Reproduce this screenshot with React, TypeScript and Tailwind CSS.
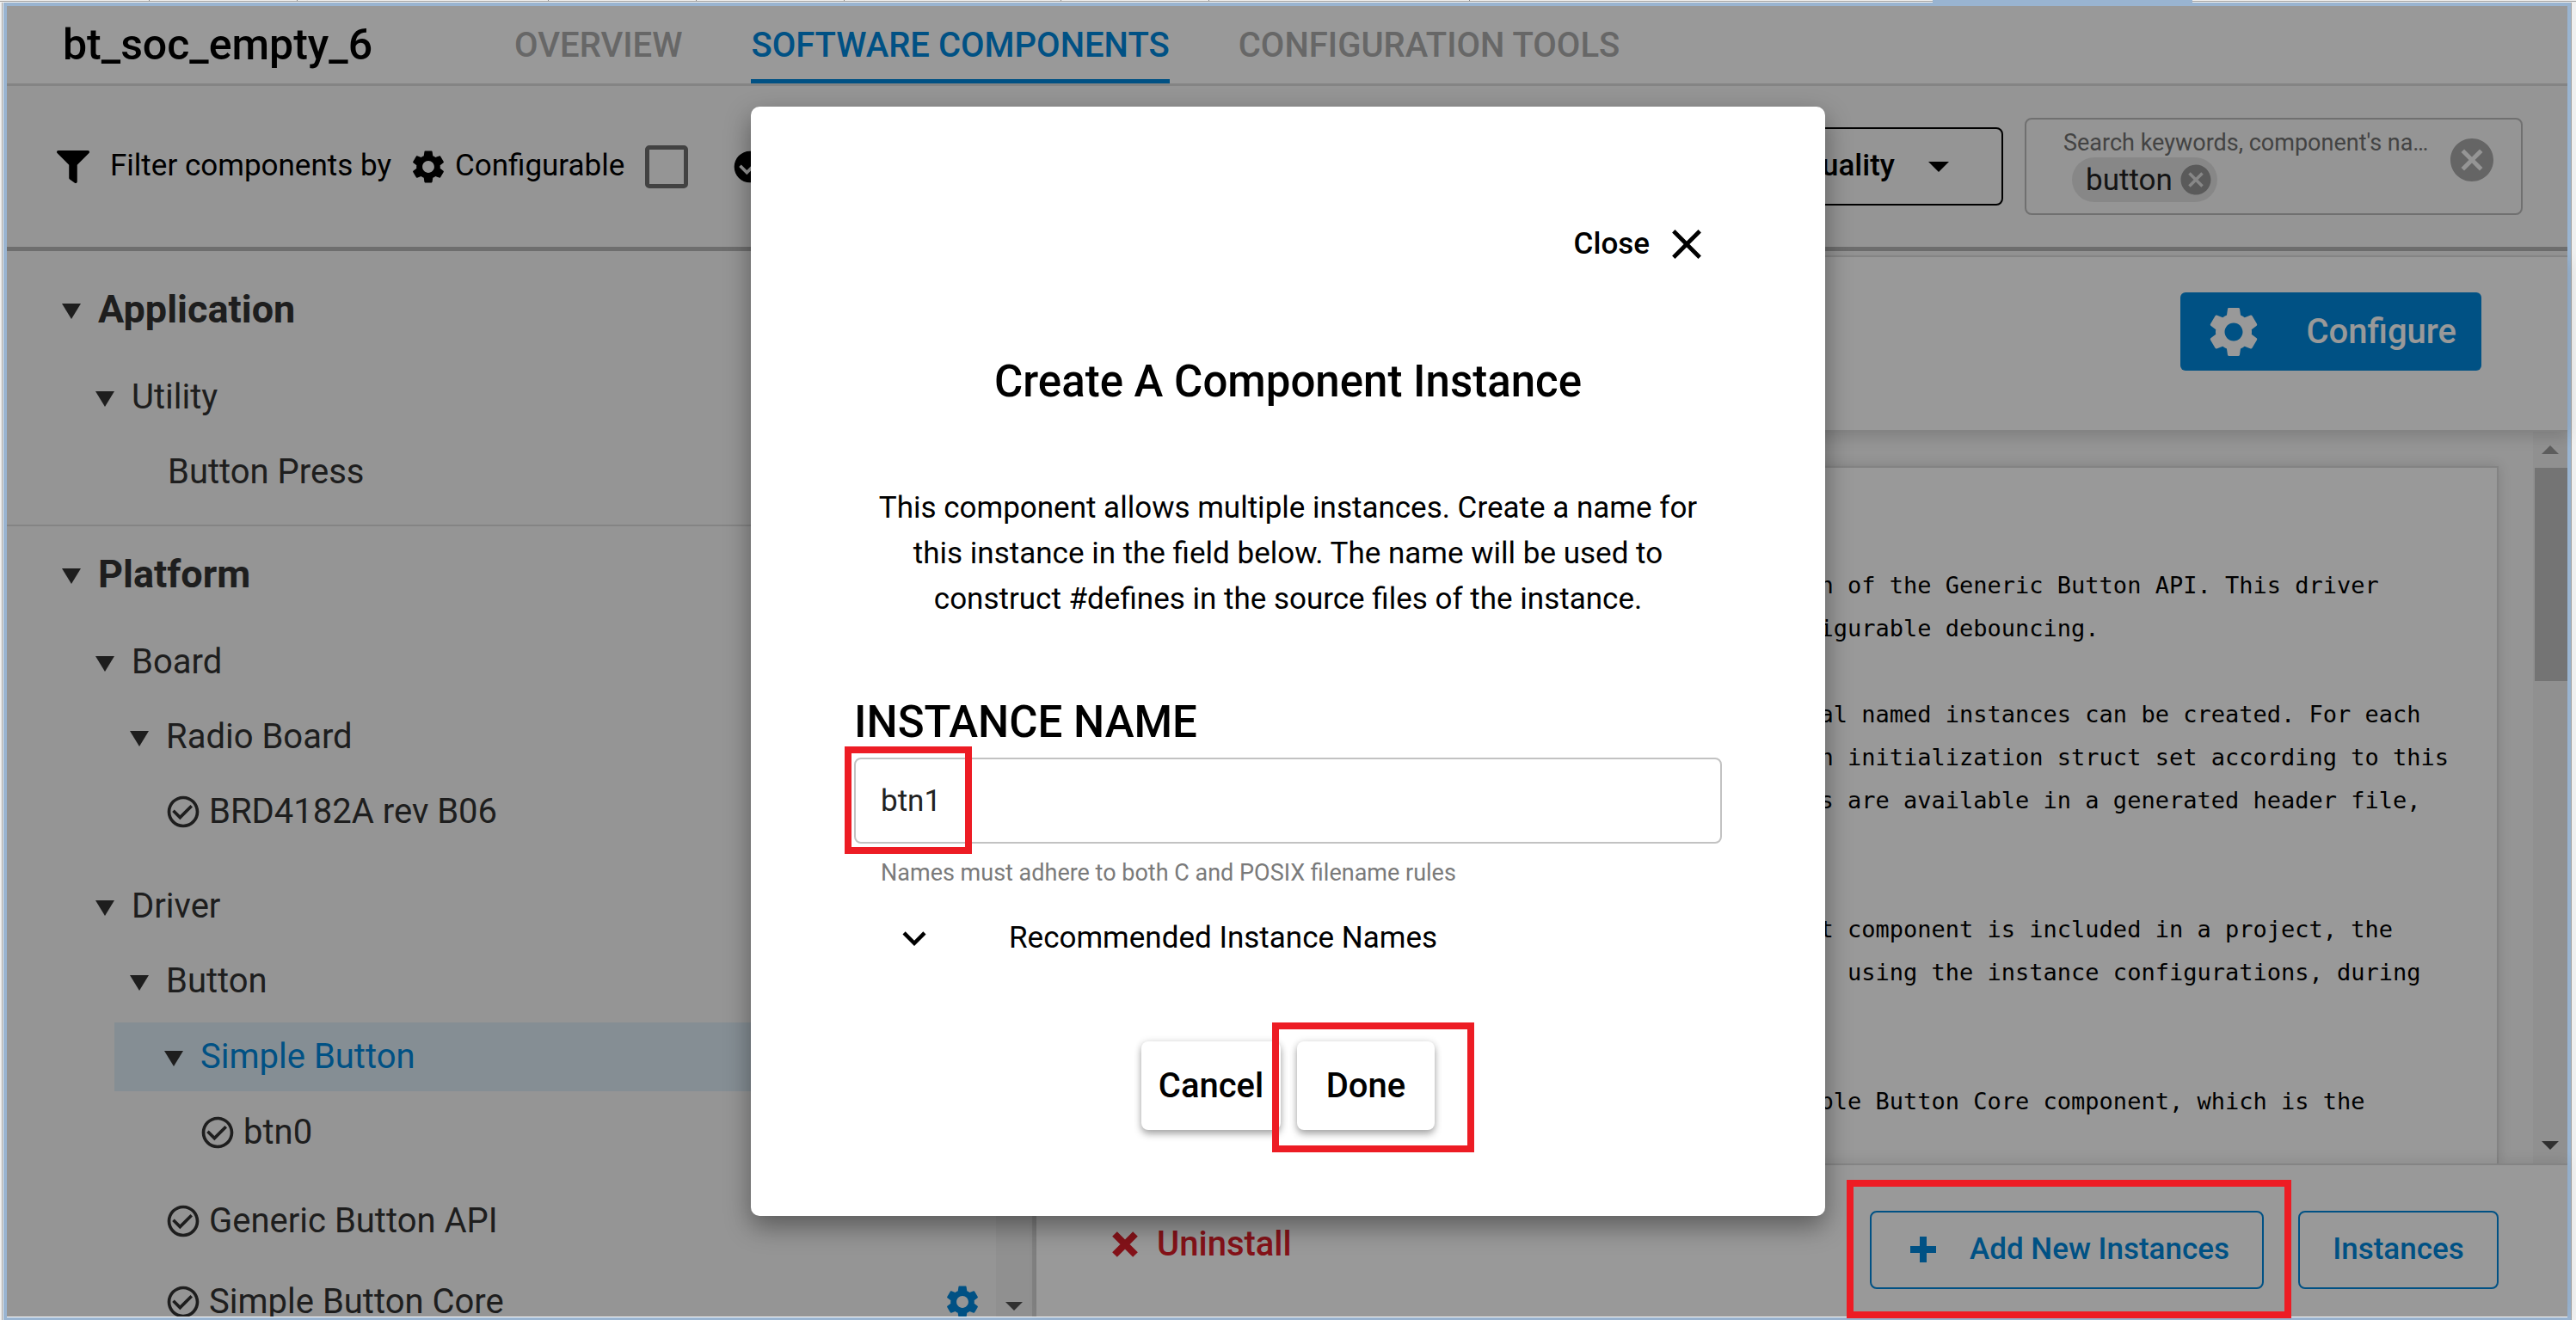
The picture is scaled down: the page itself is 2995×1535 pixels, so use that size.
import React from "react";
import { FaFilter } from "react-icons/fa";
import {
  MdCancel,
  MdCheckCircle,
  MdCheckCircleOutline,
  MdClose,
  MdExpandMore,
  MdSettings,
} from "react-icons/md";

function Triangle({ up = false, className }: { up?: boolean; className: string }) {
  return (
    <svg viewBox="0 0 24 12" preserveAspectRatio="none" className={className} fill="currentColor" aria-hidden="true">
      <path d={up ? "M0 12 12 0l12 12z" : "M0 0h24L12 12z"} />
    </svg>
  );
}

const editorTabs = [
  "w-[170px]",
  "w-[172px]",
  "w-[292px]",
  "w-[172px]",
  "w-[172px]",
  "w-[252px]",
  "w-[172px]",
  "w-[303px]",
];

function EditorTabStrip() {
  return (
    <div className="h-[3px] shrink-0 bg-[#f0f0f0]" aria-hidden="true">
      <div className="flex h-0.5 border-b border-[#a0a0a0] pl-1">
        {editorTabs.map((w, i) => (
          <div key={i} className={`${w} border-r border-[#8a8a8a]`} />
        ))}
        <div className="flex-1" />
        <div className="-mb-0.5 w-[302px] bg-[#99b4d1]" />
        <div className="w-[446px]" />
      </div>
    </div>
  );
}

function Header() {
  return (
    <header className="flex h-[93px] shrink-0 items-stretch border-b-3 border-[#dcdcdc] bg-white pl-[65px]">
      <h1 className="flex items-center text-[50px] font-medium leading-none text-black">bt_soc_empty_6</h1>
      <nav className="ml-[165px] flex gap-20 text-[40px] font-medium leading-none">
        <a href="#overview" className="flex items-center border-b-5 border-transparent pt-1.5 text-[#acacac]">
          OVERVIEW
        </a>
        <a href="#components" className="flex items-center border-b-5 border-[#0087dc] pt-1.5 text-[#0087dc]">
          SOFTWARE COMPONENTS
        </a>
        <a href="#tools" className="flex items-center border-b-5 border-transparent pt-1.5 text-[#acacac]">
          CONFIGURATION TOOLS
        </a>
      </nav>
    </header>
  );
}

function FilterBar() {
  return (
    <div className="flex h-[192px] shrink-0 items-center border-b-5 border-[#b7b7b7] pl-[58px] pr-[52px] text-[35px] text-black">
      <FaFilter className="h-[42px] w-[38px]" />
      <span className="ml-6">Filter components by</span>
      <MdSettings className="ml-5 size-[46px]" />
      <label htmlFor="configurable" className="ml-2">
        Configurable
      </label>
      <input
        id="configurable"
        type="checkbox"
        className="ml-6 size-[50px] appearance-none rounded-[5px] border-5 border-[#6e6e6e]"
      />
      <MdCheckCircle className="ml-[50px] size-[44px]" />
      <label htmlFor="installed" className="ml-2">
        Installed
      </label>
      <input
        id="installed"
        type="checkbox"
        className="ml-6 size-[50px] appearance-none rounded-[5px] border-5 border-[#6e6e6e]"
      />
      <div className="flex-1" />
      <button
        type="button"
        className="flex h-[91px] w-[260px] items-center justify-end rounded-lg border-2 border-black pr-[61px] font-medium"
      >
        Quality
        <Triangle className="ml-[39px] h-3 w-6" />
      </button>
      <div className="ml-[25px] flex h-[113px] w-[579px] items-center rounded-lg border-2 border-[#bbbbbb] pl-[43px] pr-[27px]">
        <div className="mb-0.5 flex min-w-0 flex-1 flex-col">
          <label htmlFor="search" className="whitespace-nowrap text-[27px] leading-[34px] text-[#707070]">
            Search keywords, component&#39;s na…
          </label>
          <div className="flex">
            <span className="ml-2.5 flex h-[52px] items-center gap-1.5 rounded-full bg-[#e2e2e2] pl-4 pr-1 leading-none text-[#222]">
              button
              <button type="button" aria-label="Remove button" className="text-[#979797]">
                <MdCancel className="size-[42px]" />
              </button>
            </span>
            <input id="search" type="text" className="min-w-0 flex-1 outline-none" />
          </div>
        </div>
        <button type="button" aria-label="Clear search" className="mb-4 ml-6 text-[#a8a8a8]">
          <MdCancel className="size-[60px]" />
        </button>
      </div>
    </div>
  );
}

type Row = { label: string; indent: string; space: string; kind: "group" | "leaf" | "plain" };

const platformRows: Row[] = [
  { label: "Board", indent: "pl-[103px]", space: "", kind: "group" },
  { label: "Radio Board", indent: "pl-[143px]", space: "", kind: "group" },
  { label: "BRD4182A rev B06", indent: "pl-[183px]", space: "", kind: "leaf" },
  { label: "Driver", indent: "pl-[103px]", space: "mt-[23px]", kind: "group" },
  { label: "Button", indent: "pl-[143px]", space: "", kind: "group" },
];

const platformTail: Row[] = [
  { label: "btn0", indent: "pl-[223px]", space: "", kind: "leaf" },
  { label: "Generic Button API", indent: "pl-[183px]", space: "mt-4", kind: "leaf" },
];

function TreeRow({ row }: { row: Row }) {
  return (
    <div className={`flex h-[87px] shrink-0 items-center text-[40px] ${row.indent} ${row.space}`}>
      {row.kind === "group" && <Triangle className="mr-5 mt-1 h-[18px] w-[22px]" />}
      {row.kind === "leaf" && <MdCheckCircleOutline className="mr-2 size-[44px]" />}
      {row.label}
    </div>
  );
}

function Section({ label }: { label: string }) {
  return (
    <h2 className="flex h-[88px] shrink-0 items-center pl-16 text-[45px] font-bold">
      <Triangle className="mr-5 mt-1 h-[18px] w-[22px]" />
      {label}
    </h2>
  );
}

function Sidebar() {
  return (
    <aside className="flex w-[1197px] shrink-0 border-r-5 border-[#dadada] text-[#333]">
      <div className="flex flex-1 flex-col overflow-hidden pt-6">
        <Section label="Application" />
        <div className="mt-3.5 flex flex-col border-b-2 border-[#dcdcdc] pb-[18px]">
          <TreeRow row={{ label: "Utility", indent: "pl-[103px]", space: "", kind: "group" }} />
          <TreeRow row={{ label: "Button Press", indent: "pl-[187px]", space: "", kind: "plain" }} />
        </div>
        <div className="h-3 shrink-0" />
        <Section label="Platform" />
        <div className="mt-3.5 flex flex-col">
          {platformRows.map((r) => (
            <TreeRow key={r.label} row={r} />
          ))}
          <div className="mb-1 mt-[5px] ml-[125px] flex h-20 shrink-0 items-center bg-[#deedf7] pl-[58px] text-[40px]">
            <Triangle className="mr-5 mt-1 h-[18px] w-[22px]" />
            <span className="text-[#0087dc]">Simple Button</span>
          </div>
          {platformTail.map((r) => (
            <TreeRow key={r.label} row={r} />
          ))}
          <div className="mt-[7px] flex h-[87px] shrink-0 items-center pl-[183px] text-[40px]">
            <MdCheckCircleOutline className="mr-2 size-[44px]" />
            <span className="flex-1">Simple Button Core</span>
            <MdSettings className="mr-4 size-[46px] text-[#0087dc]" />
          </div>
        </div>
      </div>
      <div className="flex w-[42px] flex-col items-center justify-end bg-[#f1f1f1] pb-[7px] text-[#505050]">
        <Triangle className="h-2.5 w-5" />
      </div>
    </aside>
  );
}

const description = `
implementation of the Generic Button API. This driver
es, with configurable debouncing.

that additional named instances can be created. For each
instance is an initialization struct set according to this
 The instances are available in a generated header file,


 When the Init component is included in a project, the
  initialized  using the instance configurations, during


  use the Simple Button Core component, which is the`.slice(1);

function Details() {
  return (
    <main className="flex min-w-0 flex-1 flex-col pt-[5px]">
      <div className="relative flex h-[205px] shrink-0 items-center justify-end border-y-2 border-[#dcdcdc] bg-white pb-7 pr-[100px] shadow-[0_6px_16px_rgba(0,0,0,0.14)]">
        <button
          type="button"
          className="flex h-[91px] w-[350px] items-center justify-between rounded-md bg-[#0087dc] pl-[27px] pr-[29px] text-[40px] font-medium text-white"
        >
          <MdSettings className="size-[70px]" />
          Configure
        </button>
      </div>
      <div className="flex min-h-0 flex-1">
        <div className="flex min-w-0 flex-1 overflow-hidden pl-10 pr-10 pt-10">
          <div className="flex flex-1 justify-end border-2 border-b-0 border-[#dadada] bg-white pr-[56px] pt-[112px] shadow-[0_0_14px_rgba(0,0,0,0.14)]">
            <pre className="font-['DejaVu_Sans_Mono',monospace] text-[27px] leading-[50px] text-black">{description}</pre>
          </div>
        </div>
        <div className="flex w-10 flex-col items-center bg-[#f1f1f1]">
          <Triangle up className="mt-4 h-2.5 w-5 shrink-0 text-[#9c9c9c]" />
          <div className="mt-4 h-[248px] w-[38px] shrink-0 self-end bg-[#c1c1c1]" />
          <div className="flex-1" />
          <Triangle className="mb-4 h-2.5 w-5 shrink-0 text-[#505050]" />
        </div>
      </div>
      <footer className="flex h-[178px] shrink-0 items-center border-t-2 border-[#dcdcdc] bg-white pb-0 pl-[88px] pr-20 pt-[20px] shadow-[0_-4px_14px_rgba(0,0,0,0.08)]">
        <button type="button" className="mb-3 flex items-center gap-[22px] text-[40px] font-medium leading-none text-[#dc1f2a]">
          <svg viewBox="0 0 30 30" className="size-[30px]" stroke="currentColor" strokeWidth="8" aria-hidden="true">
            <path d="M3 3l24 24M27 3L3 27" />
          </svg>
          Uninstall
        </button>
        <div className="flex-1" />
        <div className="relative">
          <button
            type="button"
            className="flex h-[91px] w-[458px] items-center justify-between rounded-lg border-2 border-[#0087dc] pl-[45px] pr-[38px] text-[35px] font-medium text-[#0087dc]"
          >
            <svg viewBox="0 0 30 30" className="size-[30px]" stroke="currentColor" strokeWidth="8" aria-hidden="true">
              <path d="M15 0v30M0 15h30" />
            </svg>
            Add New Instances
          </button>
          <div className="pointer-events-none absolute -bottom-[34px] -left-[27px] -right-[32px] -top-[36px] z-20 border-8 border-[#ed1c24]" />
        </div>
        <button
          type="button"
          className="ml-10 h-[91px] w-[233px] rounded-lg border-2 border-[#0087dc] text-[35px] font-medium text-[#0087dc]"
        >
          Instances
        </button>
      </footer>
    </main>
  );
}

function InstanceDialog() {
  return (
    <div className="absolute inset-0 z-10 flex items-center justify-center bg-black/40 pl-0.5">
      <div
        role="dialog"
        aria-labelledby="dialog-title"
        className="flex w-[1249px] flex-col rounded-[10px] bg-white px-[120px] pb-[100px] pt-[136px] text-[35px] text-black shadow-[0_12px_30px_rgba(0,0,0,0.4)]"
      >
        <button type="button" className="mr-3 flex h-12 items-center gap-3.5 self-end font-medium">
          Close
          <MdClose className="size-[58px]" />
        </button>
        <h2 id="dialog-title" className="mt-[106px] text-center text-[51px] font-medium leading-[60px]">
          Create A Component Instance
        </h2>
        <p className="mt-[90px] px-5 text-center leading-[53px]">
          This component allows multiple instances. Create a name for this instance in the field below. The name will be
          used to construct #defines in the source files of the instance.
        </p>
        <label htmlFor="instance-name" className="mt-[87px] text-[51px] font-medium leading-[60px]">
          INSTANCE NAME
        </label>
        <div className="relative mt-[11px]">
          <input
            id="instance-name"
            type="text"
            defaultValue="btn1"
            className="block h-[100px] w-full rounded-lg border-2 border-[#c2c2c2] px-[29px] text-[#222] outline-none"
          />
          <div className="pointer-events-none absolute -left-[11px] -top-[13px] h-[125px] w-[148px] border-8 border-[#ed1c24]" />
        </div>
        <p className="mt-4 pl-[31px] text-[27px] leading-9 text-[#7a7a7a]">
          Names must adhere to both C and POSIX filename rules
        </p>
        <button type="button" className="mt-[34px] flex h-12 items-center pl-[43px] text-left">
          <MdExpandMore className="mr-[83px] size-[54px]" />
          Recommended Instance Names
        </button>
        <div className="mt-24 flex justify-center gap-[19px] text-[40px] font-medium">
          <button
            type="button"
            className="h-[103px] w-[162px] rounded-lg bg-white shadow-[0_5px_8px_rgba(0,0,0,0.3),0_0_8px_rgba(0,0,0,0.12)]"
          >
            Cancel
          </button>
          <div className="relative">
            <button
              type="button"
              className="h-[103px] w-40 rounded-lg bg-white shadow-[0_5px_8px_rgba(0,0,0,0.3),0_0_8px_rgba(0,0,0,0.12)]"
            >
              Done
            </button>
            <div className="pointer-events-none absolute -bottom-[26px] -left-[29px] -right-[46px] -top-[22px] border-8 border-[#ed1c24]" />
          </div>
        </div>
      </div>
    </div>
  );
}

export default function App() {
  return (
    <div className="flex h-screen flex-col overflow-hidden bg-[#f0f0f0] font-['Roboto',sans-serif]">
      <EditorTabStrip />
      <div className="flex min-h-0 flex-1 pl-0.5 pr-[5px]">
        <div className="flex min-w-0 flex-1 border-x border-[#a0a0a0] pl-px">
          <div className="flex min-w-0 flex-1 flex-col border-4 border-b-3 border-[#99b4d1] bg-white pb-px">
            <div className="relative flex min-h-0 flex-1 flex-col bg-[#f8f8f8]">
              <Header />
              <FilterBar />
              <div className="flex min-h-0 flex-1">
                <Sidebar />
                <Details />
              </div>
              <InstanceDialog />
            </div>
          </div>
        </div>
      </div>
    </div>
  );
}
